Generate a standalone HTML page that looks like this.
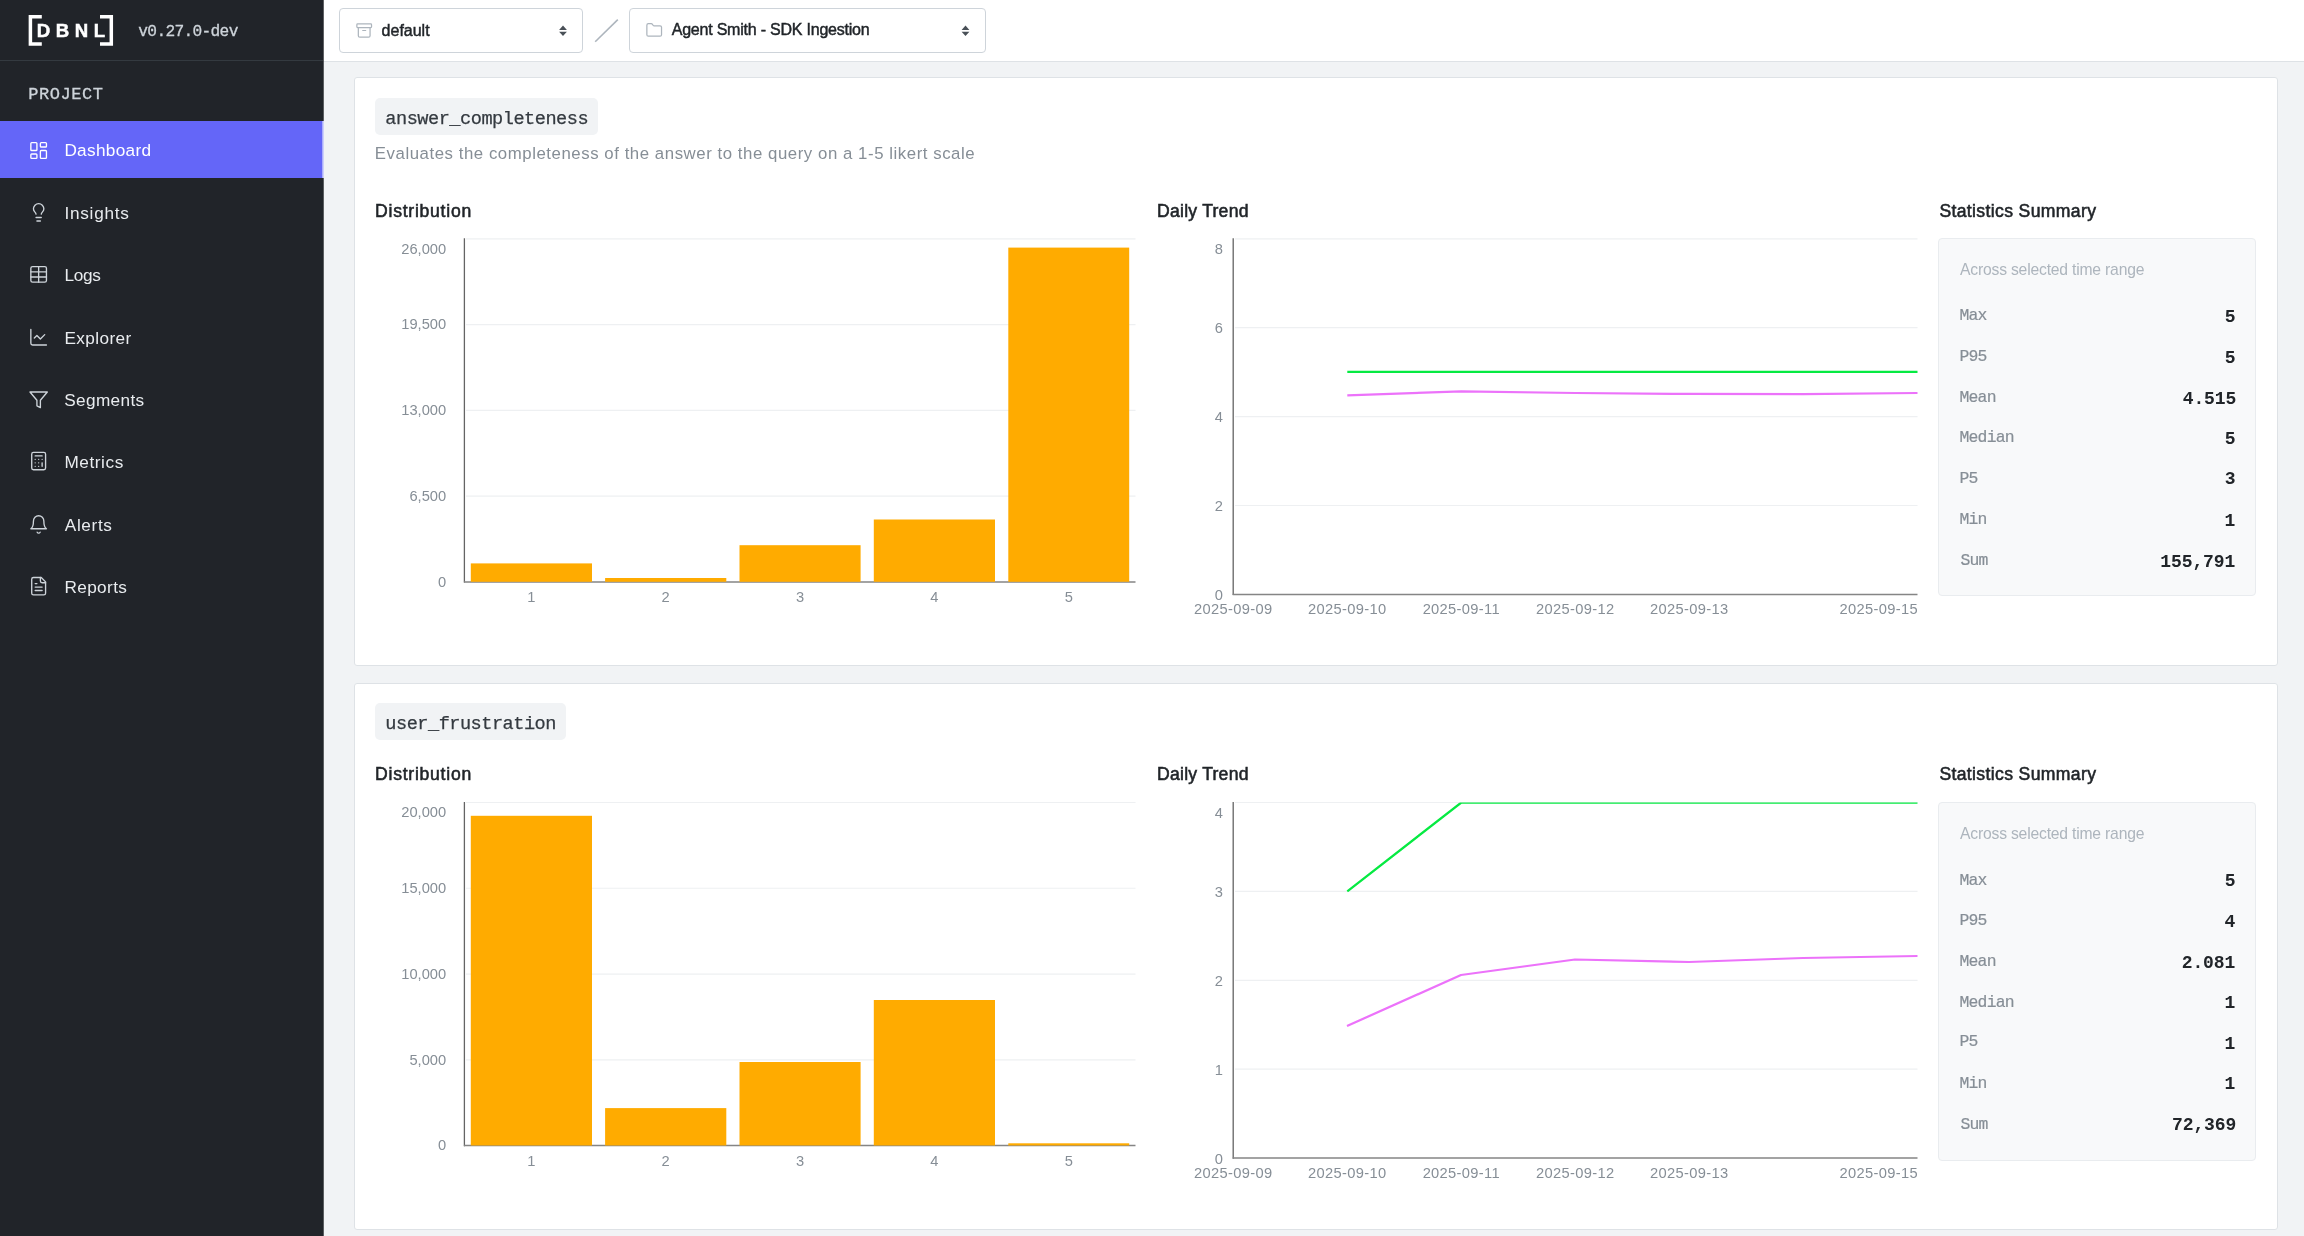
<!DOCTYPE html>
<html lang="en"><head><meta charset="utf-8"><title>DBNL Dashboard</title>
<style>
*{box-sizing:border-box;margin:0;padding:0}
html,body{width:2304px;height:1236px;overflow:hidden;background:#f1f3f5;font-family:"Liberation Sans",sans-serif;color:#212529}
.abs{position:absolute}
#root{position:absolute;left:0;top:0;width:2304px;height:1236px;overflow:hidden;will-change:transform}
.t{position:absolute;white-space:nowrap}
#side{position:absolute;left:0;top:0;width:323px;height:1236px;background:#212429}
#side .hdr{position:absolute;left:0;top:0;width:323px;height:61px;border-bottom:1px solid #343a40}
.nav{position:absolute;left:0;width:323px;height:57px}
.nav.on{background:#6466f8}
.ic{position:absolute;width:20.8px;height:20.8px;stroke:#ced4da;fill:none;stroke-width:1.55;stroke-linecap:round;stroke-linejoin:round}
.ic.on{stroke:#fff}
#top{position:absolute;left:323px;top:0;width:1981px;height:62px;background:#fff;border-bottom:1px solid #dee2e6}
.sel{position:absolute;top:8px;height:45px;border:1px solid #ced4da;border-radius:4px;background:#fff}
.card{position:absolute;left:354px;width:1924px;background:#fff;border:1px solid #dee2e6;border-radius:3px}
.badge{position:absolute;left:375px;height:37px;background:#f1f3f5;border-radius:5px}
svg text{font-family:"Liberation Sans",sans-serif;font-size:14.7px;fill:#868e96}
.stat{position:absolute;left:1938px;width:318px;height:358px;background:#f8f9fa;border:1px solid #e9ecef;border-radius:4px}
</style></head><body>
<div id="root">
<div id="side">
<div class="hdr">
<svg class="abs" style="left:0;top:0" width="130" height="60" viewBox="0 0 130 60">
<path d="M41.800 16.800H30.400V44.100H41.800" fill="none" stroke="#fff" stroke-width="3.5"/>
<path d="M100 16.800H111.300V44.100H100" fill="none" stroke="#fff" stroke-width="3.5"/>
<text x="36.700" y="36.800" style="font-family:'Liberation Sans',sans-serif;font-weight:bold;font-size:18.6px;fill:#fff;stroke:#fff;stroke-width:.5px;letter-spacing:5.6px">DBNL</text>
</svg>
</div>
<div class="nav on" style="top:121px"></div>
</div>
<div id="top">
<div class="sel" style="left:16px;width:244px"></div>
<div class="sel" style="left:306px;width:357px"></div>
</div>

<div class="card" style="top:77px;height:589px"></div>
<div class="card" style="top:683px;height:547px"></div>
<div class="badge" style="top:98px;width:223px"></div>
<div class="badge" style="top:703px;width:191px"></div>
<div class="stat" style="top:238px"></div>
<div class="stat" style="top:802px;height:359px"></div>

<svg class="abs" style="left:0;top:0;pointer-events:none" width="2304" height="1236" viewBox="0 0 2304 1236">
<rect x="323" y="0" width="0.700" height="121" fill="#1b1e22"/>
<rect x="323" y="178" width="0.700" height="1058" fill="#1b1e22"/>
<rect x="322.200" y="121" width="1.500" height="57" fill="#bfc0fc"/>
<g transform="translate(28.25 140.10) scale(0.8667)" fill="none" stroke="#fff" stroke-width="1.55" stroke-linecap="round" stroke-linejoin="round"><rect x="3" y="3" width="7" height="9" rx="1"/><rect x="14" y="3" width="7" height="5" rx="1"/><rect x="14" y="12" width="7" height="9" rx="1"/><rect x="3" y="16" width="7" height="5" rx="1"/></g>
<g transform="translate(28.25 201.90) scale(0.8667)" fill="none" stroke="#ced4da" stroke-width="1.55" stroke-linecap="round" stroke-linejoin="round"><path d="M15 14c.2-1 .7-1.700 1.500-2.500 1-.900 1.500-2.200 1.500-3.500A6 6 0 0 0 6 8c0 1 .2 2.200 1.500 3.500.7.700 1.300 1.500 1.500 2.500"/><path d="M9 18h6"/><path d="M10 22h4"/></g>
<g transform="translate(28.25 264.00) scale(0.8667)" fill="none" stroke="#ced4da" stroke-width="1.55" stroke-linecap="round" stroke-linejoin="round"><path d="M12 3v18"/><rect x="3" y="3" width="18" height="18" rx="2"/><path d="M3 9h18"/><path d="M3 15h18"/></g>
<g transform="translate(28.25 326.80) scale(0.8667)" fill="none" stroke="#ced4da" stroke-width="1.55" stroke-linecap="round" stroke-linejoin="round"><path d="M3 3v16a2 2 0 0 0 2 2h16"/><path d="m19 9-5 5-4-4-3 3"/></g>
<g transform="translate(28.25 389.40) scale(0.8667)" fill="none" stroke="#ced4da" stroke-width="1.55" stroke-linecap="round" stroke-linejoin="round"><polygon points="22 3 2 3 10 12.460 10 19 14 21 14 12.460 22 3"/></g>
<g transform="translate(28.25 450.70) scale(0.8667)" fill="none" stroke="#ced4da" stroke-width="1.55" stroke-linecap="round" stroke-linejoin="round"><rect x="4" y="2" width="16" height="20" rx="2"/><line x1="8" x2="16" y1="6" y2="6"/><line x1="16" x2="16" y1="14" y2="18"/><path d="M16 10h.01"/><path d="M12 10h.01"/><path d="M8 10h.01"/><path d="M12 14h.01"/><path d="M8 14h.01"/><path d="M12 18h.01"/><path d="M8 18h.01"/></g>
<g transform="translate(28.25 514.00) scale(0.8667)" fill="none" stroke="#ced4da" stroke-width="1.55" stroke-linecap="round" stroke-linejoin="round"><path d="M6 8a6 6 0 0 1 12 0c0 7 3 9 3 9H3s3-2 3-9"/><path d="M10.300 21a1.940 1.940 0 0 0 3.400 0"/></g>
<g transform="translate(28.25 575.80) scale(0.8667)" fill="none" stroke="#ced4da" stroke-width="1.55" stroke-linecap="round" stroke-linejoin="round"><path d="M15 2H6a2 2 0 0 0-2 2v16a2 2 0 0 0 2 2h12a2 2 0 0 0 2-2V7Z"/><path d="M14 2v4a2 2 0 0 0 2 2h4"/><path d="M10 9H8"/><path d="M16 13H8"/><path d="M16 17H8"/></g>
<g transform="translate(355.40 21.70) scale(0.7333)" fill="none" stroke="#adb5bd" stroke-width="1.7" stroke-linecap="round" stroke-linejoin="round"><rect x="2" y="3" width="20" height="5" rx="1"/><path d="M4 8v11a2 2 0 0 0 2 2h12a2 2 0 0 0 2-2V8"/><path d="M10 12h4"/></g>
<g transform="translate(645.40 21.50) scale(0.7333)" fill="none" stroke="#adb5bd" stroke-width="1.7" stroke-linecap="round" stroke-linejoin="round"><path d="M20 20a2 2 0 0 0 2-2V8a2 2 0 0 0-2-2h-7.900a2 2 0 0 1-1.690-.9L9.600 3.900A2 2 0 0 0 7.930 3H4a2 2 0 0 0-2 2v13a2 2 0 0 0 2 2Z"/></g>
<path transform="translate(559.00 25.6)" d="M4 0L7.900 4.300H0.100z M4 10.400L0.100 6.100H7.900z" fill="#495057"/>
<path transform="translate(961.50 25.6)" d="M4 0L7.900 4.300H0.100z M4 10.400L0.100 6.100H7.900z" fill="#495057"/>
<path d="M595.200 41.800L617.800 19.600" stroke="#adb5bd" stroke-width="1.6" fill="none"/>
<line x1="466" x2="1135.5" y1="238.80" y2="238.80" stroke="#eef0f2" stroke-width="1.2"/>
<line x1="466" x2="1135.5" y1="324.58" y2="324.58" stroke="#eef0f2" stroke-width="1.2"/>
<line x1="466" x2="1135.5" y1="410.35" y2="410.35" stroke="#eef0f2" stroke-width="1.2"/>
<line x1="466" x2="1135.5" y1="496.13" y2="496.13" stroke="#eef0f2" stroke-width="1.2"/>
<line x1="464.4" x2="464.4" y1="238.20" y2="582.60" stroke="#646464" stroke-width="1.3"/>
<line x1="463.9" x2="1135.5" y1="581.90" y2="581.90" stroke="#858585" stroke-width="1.5"/>
<rect x="470.8" y="563.4" width="121.2" height="18.40" fill="#ffab00"/>
<rect x="605.1" y="578" width="121.2" height="3.80" fill="#ffab00"/>
<rect x="739.5" y="545.2" width="121.1" height="36.60" fill="#ffab00"/>
<rect x="873.8" y="519.5" width="121.2" height="62.30" fill="#ffab00"/>
<rect x="1008.3" y="247.6" width="120.9" height="334.20" fill="#ffab00"/>
<text x="446.2" y="253.60" text-anchor="end">26,000</text>
<text x="446.2" y="329.38" text-anchor="end">19,500</text>
<text x="446.2" y="415.15" text-anchor="end">13,000</text>
<text x="446.2" y="500.93" text-anchor="end">6,500</text>
<text x="446.2" y="586.70" text-anchor="end">0</text>
<text x="531.4" y="602.10" text-anchor="middle">1</text>
<text x="665.7" y="602.10" text-anchor="middle">2</text>
<text x="800.0" y="602.10" text-anchor="middle">3</text>
<text x="934.4" y="602.10" text-anchor="middle">4</text>
<text x="1068.8" y="602.10" text-anchor="middle">5</text>
<line x1="1235" x2="1917.5" y1="238.80" y2="238.80" stroke="#eef0f2" stroke-width="1.2"/>
<line x1="1235" x2="1917.5" y1="327.70" y2="327.70" stroke="#eef0f2" stroke-width="1.2"/>
<line x1="1235" x2="1917.5" y1="416.60" y2="416.60" stroke="#eef0f2" stroke-width="1.2"/>
<line x1="1235" x2="1917.5" y1="505.50" y2="505.50" stroke="#eef0f2" stroke-width="1.2"/>
<clipPath id="c238"><rect x="1233" y="238.80" width="685" height="355.60"/></clipPath>
<g clip-path="url(#c238)"><polyline points="1347.3,371.85 1917.5,371.85" fill="none" stroke="#06ea42" stroke-width="2.25" stroke-linejoin="round"/>
<polyline points="1347.3,395.4 1461.3,391.3 1575.3,393 1689.3,393.9 1803.3,394.1 1917.5,393" fill="none" stroke="#ec72fa" stroke-width="2.25" stroke-linejoin="round"/></g>
<line x1="1233.2" x2="1233.2" y1="238.20" y2="595.10" stroke="#646464" stroke-width="1.3"/>
<line x1="1232.7" x2="1917.5" y1="594.40" y2="594.40" stroke="#858585" stroke-width="1.5"/>
<text x="1223" y="254.20" text-anchor="end">8</text>
<text x="1223" y="333.10" text-anchor="end">6</text>
<text x="1223" y="422.00" text-anchor="end">4</text>
<text x="1223" y="510.90" text-anchor="end">2</text>
<text x="1223" y="599.80" text-anchor="end">0</text>
<text x="1233.3" y="613.90" text-anchor="middle" letter-spacing="0.33">2025-09-09</text>
<text x="1347.3" y="613.90" text-anchor="middle" letter-spacing="0.33">2025-09-10</text>
<text x="1461.3" y="613.90" text-anchor="middle" letter-spacing="0.33">2025-09-11</text>
<text x="1575.3" y="613.90" text-anchor="middle" letter-spacing="0.33">2025-09-12</text>
<text x="1689.3" y="613.90" text-anchor="middle" letter-spacing="0.33">2025-09-13</text>
<text x="1918" y="613.90" text-anchor="end" letter-spacing="0.33">2025-09-15</text>
<line x1="466" x2="1135.5" y1="802.50" y2="802.50" stroke="#eef0f2" stroke-width="1.2"/>
<line x1="466" x2="1135.5" y1="888.27" y2="888.27" stroke="#eef0f2" stroke-width="1.2"/>
<line x1="466" x2="1135.5" y1="974.05" y2="974.05" stroke="#eef0f2" stroke-width="1.2"/>
<line x1="466" x2="1135.5" y1="1059.83" y2="1059.83" stroke="#eef0f2" stroke-width="1.2"/>
<line x1="464.4" x2="464.4" y1="801.90" y2="1146.30" stroke="#646464" stroke-width="1.3"/>
<line x1="463.9" x2="1135.5" y1="1145.60" y2="1145.60" stroke="#858585" stroke-width="1.5"/>
<rect x="470.8" y="815.8" width="121.2" height="329.70" fill="#ffab00"/>
<rect x="605.1" y="1108.1" width="121.2" height="37.40" fill="#ffab00"/>
<rect x="739.5" y="1062" width="121.1" height="83.50" fill="#ffab00"/>
<rect x="873.8" y="1000" width="121.2" height="145.50" fill="#ffab00"/>
<rect x="1008.3" y="1143.3" width="120.9" height="2.20" fill="#ffab00"/>
<text x="446.2" y="817.30" text-anchor="end">20,000</text>
<text x="446.2" y="893.07" text-anchor="end">15,000</text>
<text x="446.2" y="978.85" text-anchor="end">10,000</text>
<text x="446.2" y="1064.62" text-anchor="end">5,000</text>
<text x="446.2" y="1150.40" text-anchor="end">0</text>
<text x="531.4" y="1165.80" text-anchor="middle">1</text>
<text x="665.7" y="1165.80" text-anchor="middle">2</text>
<text x="800.0" y="1165.80" text-anchor="middle">3</text>
<text x="934.4" y="1165.80" text-anchor="middle">4</text>
<text x="1068.8" y="1165.80" text-anchor="middle">5</text>
<line x1="1235" x2="1917.5" y1="802.50" y2="802.50" stroke="#eef0f2" stroke-width="1.2"/>
<line x1="1235" x2="1917.5" y1="891.40" y2="891.40" stroke="#eef0f2" stroke-width="1.2"/>
<line x1="1235" x2="1917.5" y1="980.30" y2="980.30" stroke="#eef0f2" stroke-width="1.2"/>
<line x1="1235" x2="1917.5" y1="1069.20" y2="1069.20" stroke="#eef0f2" stroke-width="1.2"/>
<clipPath id="c802"><rect x="1233" y="802.50" width="685" height="355.60"/></clipPath>
<g clip-path="url(#c802)"><polyline points="1347.3,891.3 1461.3,802.500 1917.5,802.500" fill="none" stroke="#06ea42" stroke-width="2.25" stroke-linejoin="round"/>
<polyline points="1347,1026 1461,975 1575,959.500 1689,962 1803,958 1917.5,956" fill="none" stroke="#ec72fa" stroke-width="2.25" stroke-linejoin="round"/></g>
<line x1="1233.2" x2="1233.2" y1="801.90" y2="1158.80" stroke="#646464" stroke-width="1.3"/>
<line x1="1232.7" x2="1917.5" y1="1158.10" y2="1158.10" stroke="#858585" stroke-width="1.5"/>
<text x="1223" y="817.90" text-anchor="end">4</text>
<text x="1223" y="896.80" text-anchor="end">3</text>
<text x="1223" y="985.70" text-anchor="end">2</text>
<text x="1223" y="1074.60" text-anchor="end">1</text>
<text x="1223" y="1163.50" text-anchor="end">0</text>
<text x="1233.3" y="1177.60" text-anchor="middle" letter-spacing="0.33">2025-09-09</text>
<text x="1347.3" y="1177.60" text-anchor="middle" letter-spacing="0.33">2025-09-10</text>
<text x="1461.3" y="1177.60" text-anchor="middle" letter-spacing="0.33">2025-09-11</text>
<text x="1575.3" y="1177.60" text-anchor="middle" letter-spacing="0.33">2025-09-12</text>
<text x="1689.3" y="1177.60" text-anchor="middle" letter-spacing="0.33">2025-09-13</text>
<text x="1918" y="1177.60" text-anchor="end" letter-spacing="0.33">2025-09-15</text>
</svg>
<div class="t" style="left:138.35px;top:20.00px;font:normal 16.2px/24px 'Liberation Mono', monospace;color:#ced4da;letter-spacing:-0.684px;-webkit-text-stroke:0.3px #ced4da">v0.27.0-dev</div>
<div class="t" style="left:28.35px;top:83.10px;font:normal 17.0px/24px 'Liberation Mono', monospace;color:#ced4da;letter-spacing:0.532px;-webkit-text-stroke:0.3px #ced4da">PROJECT</div>
<div class="t" style="left:64.40px;top:138.40px;font:normal 17.2px/24px 'Liberation Sans', sans-serif;color:#ffffff;letter-spacing:0.322px">Dashboard</div>
<div class="t" style="left:64.40px;top:200.79px;font:normal 17.2px/24px 'Liberation Sans', sans-serif;color:#e9ecef;letter-spacing:0.752px">Insights</div>
<div class="t" style="left:64.40px;top:263.18px;font:normal 17.2px/24px 'Liberation Sans', sans-serif;color:#e9ecef;letter-spacing:-0.292px">Logs</div>
<div class="t" style="left:64.40px;top:325.57px;font:normal 17.2px/24px 'Liberation Sans', sans-serif;color:#e9ecef;letter-spacing:0.403px">Explorer</div>
<div class="t" style="left:64.30px;top:387.96px;font:normal 17.2px/24px 'Liberation Sans', sans-serif;color:#e9ecef;letter-spacing:0.344px">Segments</div>
<div class="t" style="left:64.40px;top:450.35px;font:normal 17.2px/24px 'Liberation Sans', sans-serif;color:#e9ecef;letter-spacing:0.585px">Metrics</div>
<div class="t" style="left:64.80px;top:512.74px;font:normal 17.2px/24px 'Liberation Sans', sans-serif;color:#e9ecef;letter-spacing:0.632px">Alerts</div>
<div class="t" style="left:64.40px;top:575.13px;font:normal 17.2px/24px 'Liberation Sans', sans-serif;color:#e9ecef;letter-spacing:0.385px">Reports</div>
<div class="t" style="left:381.62px;top:18.70px;font:normal 16px/24px 'Liberation Sans', sans-serif;color:#212529;letter-spacing:-0.007px;-webkit-text-stroke:0.45px #212529">default</div>
<div class="t" style="left:671.73px;top:18.20px;font:normal 16.0px/24px 'Liberation Sans', sans-serif;color:#212529;letter-spacing:-0.220px;-webkit-text-stroke:0.45px #212529">Agent Smith - SDK Ingestion</div>
<div class="t" style="left:385.32px;top:108.40px;font:normal 18.6px/24px 'Liberation Mono', monospace;color:#343a40;letter-spacing:-0.483px;-webkit-text-stroke:0.25px #343a40">answer_completeness</div>
<div class="t" style="left:374.80px;top:141.80px;font:normal 16.8px/24px 'Liberation Sans', sans-serif;color:#868e96;letter-spacing:0.555px">Evaluates the completeness of the answer to the query on a 1-5 likert scale</div>
<div class="t" style="left:385.32px;top:713.20px;font:normal 18.6px/24px 'Liberation Mono', monospace;color:#343a40;letter-spacing:-0.495px;-webkit-text-stroke:0.25px #343a40">user_frustration</div>
<div class="t" style="left:375.07px;top:198.50px;font:normal 17.6px/24px 'Liberation Sans', sans-serif;color:#212529;letter-spacing:0.739px;-webkit-text-stroke:0.55px #212529">Distribution</div>
<div class="t" style="left:1156.98px;top:198.50px;font:normal 17.6px/24px 'Liberation Sans', sans-serif;color:#212529;letter-spacing:0.253px;-webkit-text-stroke:0.55px #212529">Daily Trend</div>
<div class="t" style="left:1939.38px;top:198.50px;font:normal 17.6px/24px 'Liberation Sans', sans-serif;color:#212529;letter-spacing:0.359px;-webkit-text-stroke:0.55px #212529">Statistics Summary</div>
<div class="t" style="left:1960.00px;top:258.10px;font:normal 15.7px/24px 'Liberation Sans', sans-serif;color:#adb5bd;letter-spacing:-0.191px">Across selected time range</div>
<div class="t" style="left:375.07px;top:762.00px;font:normal 17.6px/24px 'Liberation Sans', sans-serif;color:#212529;letter-spacing:0.739px;-webkit-text-stroke:0.55px #212529">Distribution</div>
<div class="t" style="left:1156.98px;top:762.00px;font:normal 17.6px/24px 'Liberation Sans', sans-serif;color:#212529;letter-spacing:0.253px;-webkit-text-stroke:0.55px #212529">Daily Trend</div>
<div class="t" style="left:1939.38px;top:762.00px;font:normal 17.6px/24px 'Liberation Sans', sans-serif;color:#212529;letter-spacing:0.359px;-webkit-text-stroke:0.55px #212529">Statistics Summary</div>
<div class="t" style="left:1960.00px;top:821.60px;font:normal 15.7px/24px 'Liberation Sans', sans-serif;color:#adb5bd;letter-spacing:-0.191px">Across selected time range</div>
<div class="t" style="left:1959.40px;top:304.00px;font:normal 16.4px/24px 'Liberation Mono', monospace;color:#868e96;letter-spacing:-0.750px;-webkit-text-stroke:0.2px #868e96">Max</div>
<div class="t" style="left:2224.80px;top:304.70px;font:bold 18.0px/24px 'Liberation Mono', monospace;color:#212529;letter-spacing:-0.100px">5</div>
<div class="t" style="left:1959.40px;top:345.10px;font:normal 16.4px/24px 'Liberation Mono', monospace;color:#868e96;letter-spacing:-0.750px;-webkit-text-stroke:0.2px #868e96">P95</div>
<div class="t" style="left:2224.80px;top:345.80px;font:bold 18.0px/24px 'Liberation Mono', monospace;color:#212529;letter-spacing:-0.100px">5</div>
<div class="t" style="left:1959.40px;top:386.40px;font:normal 16.4px/24px 'Liberation Mono', monospace;color:#868e96;letter-spacing:-0.750px;-webkit-text-stroke:0.2px #868e96">Mean</div>
<div class="t" style="left:2182.69px;top:386.60px;font:bold 18.0px/24px 'Liberation Mono', monospace;color:#212529;letter-spacing:-0.100px">4.515</div>
<div class="t" style="left:1959.40px;top:426.20px;font:normal 16.4px/24px 'Liberation Mono', monospace;color:#868e96;letter-spacing:-0.750px;-webkit-text-stroke:0.2px #868e96">Median</div>
<div class="t" style="left:2224.80px;top:427.20px;font:bold 18.0px/24px 'Liberation Mono', monospace;color:#212529;letter-spacing:-0.100px">5</div>
<div class="t" style="left:1959.40px;top:467.00px;font:normal 16.4px/24px 'Liberation Mono', monospace;color:#868e96;letter-spacing:-0.750px;-webkit-text-stroke:0.2px #868e96">P5</div>
<div class="t" style="left:2224.80px;top:467.30px;font:bold 18.0px/24px 'Liberation Mono', monospace;color:#212529;letter-spacing:-0.100px">3</div>
<div class="t" style="left:1959.40px;top:508.40px;font:normal 16.4px/24px 'Liberation Mono', monospace;color:#868e96;letter-spacing:-0.750px;-webkit-text-stroke:0.2px #868e96">Min</div>
<div class="t" style="left:2224.50px;top:508.60px;font:bold 18.0px/24px 'Liberation Mono', monospace;color:#212529;letter-spacing:-0.100px">1</div>
<div class="t" style="left:1960.40px;top:548.60px;font:normal 16.4px/24px 'Liberation Mono', monospace;color:#868e96;letter-spacing:-0.750px;-webkit-text-stroke:0.2px #868e96">Sum</div>
<div class="t" style="left:2160.29px;top:549.60px;font:bold 18.0px/24px 'Liberation Mono', monospace;color:#212529;letter-spacing:-0.100px">155,791</div>
<div class="t" style="left:1959.40px;top:868.60px;font:normal 16.4px/24px 'Liberation Mono', monospace;color:#868e96;letter-spacing:-0.750px;-webkit-text-stroke:0.2px #868e96">Max</div>
<div class="t" style="left:2224.80px;top:869.00px;font:bold 18.0px/24px 'Liberation Mono', monospace;color:#212529;letter-spacing:-0.100px">5</div>
<div class="t" style="left:1959.40px;top:908.70px;font:normal 16.4px/24px 'Liberation Mono', monospace;color:#868e96;letter-spacing:-0.750px;-webkit-text-stroke:0.2px #868e96">P95</div>
<div class="t" style="left:2224.50px;top:909.80px;font:bold 18.0px/24px 'Liberation Mono', monospace;color:#212529;letter-spacing:-0.100px">4</div>
<div class="t" style="left:1959.40px;top:950.20px;font:normal 16.4px/24px 'Liberation Mono', monospace;color:#868e96;letter-spacing:-0.750px;-webkit-text-stroke:0.2px #868e96">Mean</div>
<div class="t" style="left:2181.69px;top:950.50px;font:bold 18.0px/24px 'Liberation Mono', monospace;color:#212529;letter-spacing:-0.100px">2.081</div>
<div class="t" style="left:1959.40px;top:990.90px;font:normal 16.4px/24px 'Liberation Mono', monospace;color:#868e96;letter-spacing:-0.750px;-webkit-text-stroke:0.2px #868e96">Median</div>
<div class="t" style="left:2224.50px;top:991.30px;font:bold 18.0px/24px 'Liberation Mono', monospace;color:#212529;letter-spacing:-0.100px">1</div>
<div class="t" style="left:1959.40px;top:1030.40px;font:normal 16.4px/24px 'Liberation Mono', monospace;color:#868e96;letter-spacing:-0.750px;-webkit-text-stroke:0.2px #868e96">P5</div>
<div class="t" style="left:2224.50px;top:1032.30px;font:bold 18.0px/24px 'Liberation Mono', monospace;color:#212529;letter-spacing:-0.100px">1</div>
<div class="t" style="left:1959.40px;top:1071.70px;font:normal 16.4px/24px 'Liberation Mono', monospace;color:#868e96;letter-spacing:-0.750px;-webkit-text-stroke:0.2px #868e96">Min</div>
<div class="t" style="left:2224.50px;top:1072.30px;font:bold 18.0px/24px 'Liberation Mono', monospace;color:#212529;letter-spacing:-0.100px">1</div>
<div class="t" style="left:1960.40px;top:1113.30px;font:normal 16.4px/24px 'Liberation Mono', monospace;color:#868e96;letter-spacing:-0.750px;-webkit-text-stroke:0.2px #868e96">Sum</div>
<div class="t" style="left:2171.99px;top:1113.20px;font:bold 18.0px/24px 'Liberation Mono', monospace;color:#212529;letter-spacing:-0.100px">72,369</div>
</div>
</body></html>
